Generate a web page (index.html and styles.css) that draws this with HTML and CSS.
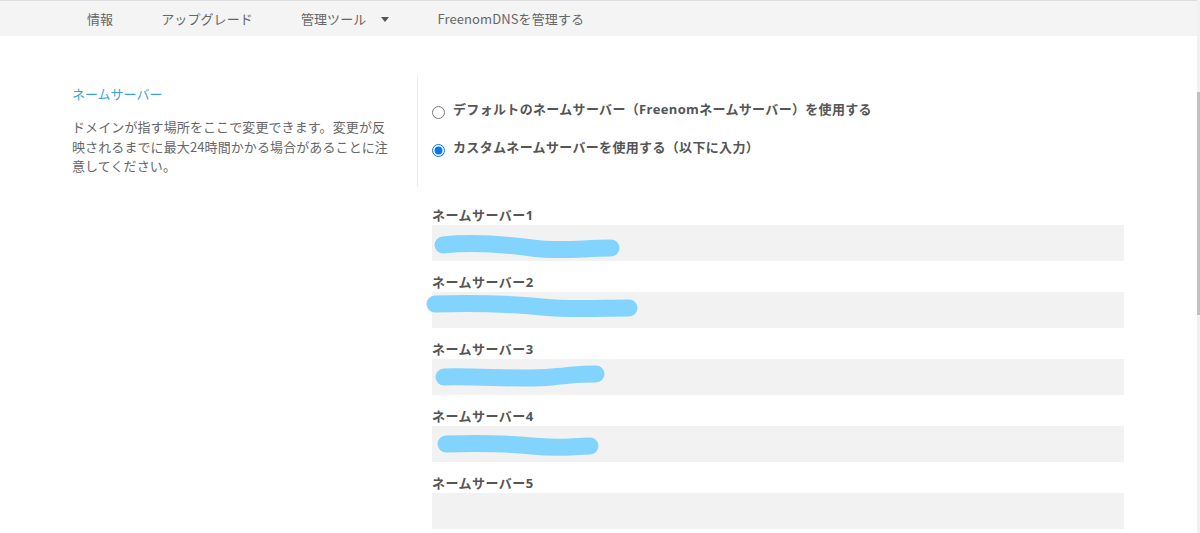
FILE: index.html
```html
<!DOCTYPE html>
<html lang="ja">
<head>
<meta charset="utf-8">
<title>ネームサーバー</title>
<link rel="stylesheet" href="styles.css">
</head>
<body>
<nav class="nav">
  <a class="nav-item">情報</a>
  <a class="nav-item">アップグレード</a>
  <a class="nav-item">管理ツール<span class="caret"></span></a>
  <a class="nav-item">FreenomDNSを管理する</a>
</nav>

<main class="page">
  <section class="info">
    <h2 class="info-title">ネームサーバー</h2>
    <p class="info-text">ドメインが指す場所をここで変更できます。変更が反映されるまでに最大24時間かかる場合があることに注意してください。</p>
  </section>

  <section class="choice">
    <label class="radio-row"><input type="radio" name="ns" class="radio"><span>デフォルトのネームサーバー（Freenomネームサーバー）を使用する</span></label>
    <label class="radio-row"><input type="radio" name="ns" class="radio" checked><span>カスタムネームサーバーを使用する（以下に入力）</span></label>
  </section>

  <div class="spacer"></div>

  <section class="fields">
    <div class="field">
      <div class="field-label">ネームサーバー1</div>
      <div class="field-box">
        <svg class="scribble" width="200" height="40" viewBox="0 0 200 40"><path d="M11 20 C 40 17, 70 19, 100 23 S 150 23, 179 23" /></svg>
      </div>
    </div>
    <div class="field">
      <div class="field-label">ネームサーバー2</div>
      <div class="field-box">
        <svg class="scribble" width="220" height="40" viewBox="0 0 220 40"><path d="M3 12 C 40 11, 80 12, 110 15 S 170 16, 197 16" /></svg>
      </div>
    </div>
    <div class="field">
      <div class="field-label">ネームサーバー3</div>
      <div class="field-box">
        <svg class="scribble" width="200" height="40" viewBox="0 0 200 40"><path d="M12 18 C 50 17, 90 21, 120 18 S 150 15, 164 15" /></svg>
      </div>
    </div>
    <div class="field">
      <div class="field-label">ネームサーバー4</div>
      <div class="field-box">
        <svg class="scribble" width="200" height="40" viewBox="0 0 200 40"><path d="M14 18 C 40 17, 70 17, 100 20 S 140 20, 158 20" /></svg>
      </div>
    </div>
    <div class="field">
      <div class="field-label">ネームサーバー5</div>
      <div class="field-box"></div>
    </div>
  </section>
</main>

<div class="scrollbar"><div class="scroll-thumb"></div></div>
</body>
</html>
```

FILE: styles.css
```css
html, body {
  margin: 0;
  padding: 0;
  height: 100%;
  overflow: hidden;
  background: #ffffff;
  font-family: "Open Sans", "Noto Sans CJK JP", sans-serif;
  font-size: 13px;
  color: #555555;
}

.nav {
  display: flex;
  align-items: center;
  height: 35px;
  border-top: 1px solid #dddddd;
  background: #f4f4f4;
  padding-left: 63px;
  margin-right: 3px;
}

.nav-item {
  display: flex;
  align-items: center;
  padding: 0 24px;
  font-family: "Noto Sans CJK JP", "Open Sans", sans-serif;
  font-weight: 400;
  font-size: 13px;
  letter-spacing: 0.1px;
  color: #666666;
  line-height: 20px;
}

.caret {
  width: 0;
  height: 0;
  margin-left: 15px;
  margin-top: 1px;
  border-left: 4.5px solid transparent;
  border-right: 4.5px solid transparent;
  border-top: 5px solid #555555;
}

.page {
  display: grid;
  grid-template-columns: 345px 707px;
  padding: 39px 0 0 72px;
}

.info {
  padding-top: 9px;
}

.info-title {
  margin: 0;
  font-family: "Noto Sans CJK JP", sans-serif;
  font-size: 13px;
  font-weight: 400;
  line-height: 20px;
  color: #37a3d8;
}

.info-text {
  margin: 13px 0 0;
  width: 322px;
  font-family: "Noto Sans CJK JP", sans-serif;
  font-size: 13px;
  line-height: 19.5px;
  letter-spacing: 0.1px;
  color: #666666;
}

.choice {
  border-left: 1px solid #eeeeee;
  height: 112px;
  box-sizing: border-box;
  padding: 24px 0 0 14px;
  display: flex;
  flex-direction: column;
  gap: 18px;
}

.radio-row {
  display: flex;
  align-items: flex-start;
  gap: 8px;
  line-height: 20px;
  font-family: "Open Sans", "Noto Sans CJK JP", sans-serif;
  font-weight: 700;
  font-size: 13px;
  letter-spacing: 0.33px;
  color: #555555;
}

.radio {
  width: 13px;
  height: 13px;
  margin: 7px 0 0 0;
  accent-color: #0075ff;
}

.fields {
  padding: 18px 0 0 15px;
  display: flex;
  flex-direction: column;
  gap: 11px;
}

.field-label {
  font-family: "Open Sans", "Noto Sans CJK JP", sans-serif;
  font-weight: 700;
  font-size: 13px;
  line-height: 20px;
  letter-spacing: 0.45px;
  color: #555555;
}

.field-box {
  position: relative;
  height: 36px;
  background: #f2f2f2;
}

.scribble {
  position: absolute;
  left: 0;
  top: 0;
  overflow: visible;
}

.scribble path {
  fill: none;
  stroke: #82d4fe;
  stroke-width: 17;
  stroke-linecap: round;
  stroke-linejoin: round;
}

.scrollbar {
  position: fixed;
  top: 0;
  right: 0;
  width: 3px;
  height: 100%;
  background: #f1f1f1;
}

.scroll-thumb {
  margin-top: 92px;
  height: 223px;
  background: #c1c1c1;
}
```
